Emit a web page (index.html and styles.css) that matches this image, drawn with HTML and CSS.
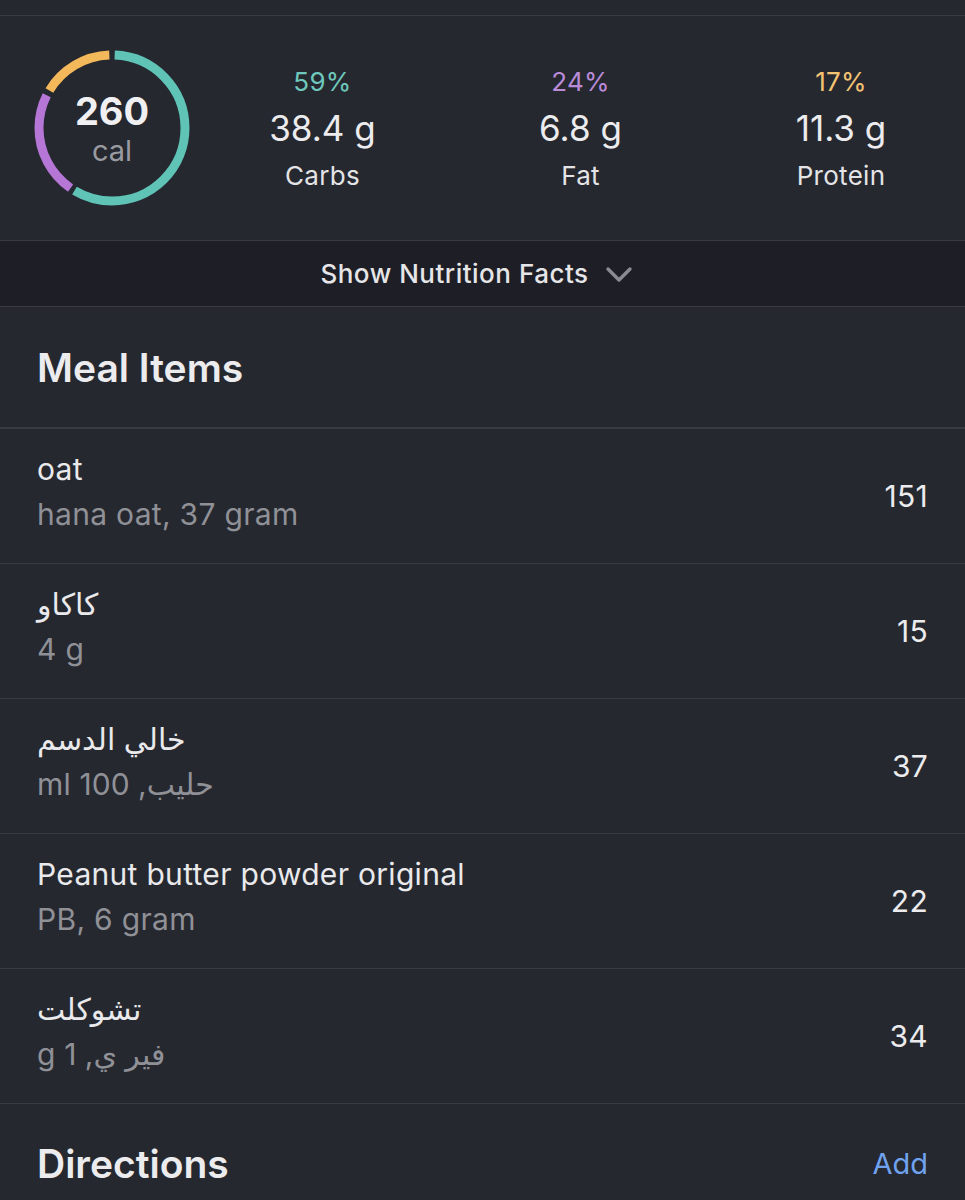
FILE: index.html
```html
<!DOCTYPE html>
<html lang="en">
<head>
  <meta charset="UTF-8">
  <meta name="viewport" content="width=device-width, initial-scale=1.0">
  <title>Meal</title>
  <link rel="stylesheet" href="styles.css">
</head>
<body>
  <div class="topbar"></div>

  <!-- Calorie summary -->
  <div class="summary">
    <div class="ring">
      <svg width="164" height="164" viewBox="0 0 164 164">
        <g transform="rotate(-90 82 82)" fill="none" stroke-width="9">
          <circle cx="82" cy="82" r="73" pathLength="100" stroke="#5fc3b6" stroke-dasharray="58 42" stroke-dashoffset="-0.6"></circle>
          <circle cx="82" cy="82" r="73" pathLength="100" stroke="#b576d6" stroke-dasharray="22.8 77.2" stroke-dashoffset="-59.6"></circle>
          <circle cx="82" cy="82" r="73" pathLength="100" stroke="#f3b85a" stroke-dasharray="15.8 84.2" stroke-dashoffset="-83.6"></circle>
        </g>
      </svg>
      <div class="ring-label">
        <div class="cal-num">260</div>
        <div class="cal-unit">cal</div>
      </div>
    </div>
    <div class="macros">
      <div class="macro">
        <div class="pct carbs">59%</div>
        <div class="grams">38.4 g</div>
        <div class="name">Carbs</div>
      </div>
      <div class="macro">
        <div class="pct fat">24%</div>
        <div class="grams">6.8 g</div>
        <div class="name">Fat</div>
      </div>
      <div class="macro">
        <div class="pct protein">17%</div>
        <div class="grams">11.3 g</div>
        <div class="name">Protein</div>
      </div>
    </div>
  </div>

  <div class="facts-toggle">
    Show Nutrition Facts
    <svg width="28" height="18" viewBox="0 0 28 18"><path d="M3 3 L14 14 L25 3" fill="none" stroke="#8a8b92" stroke-width="3.4" stroke-linecap="round" stroke-linejoin="round"/></svg>
  </div>

  <!-- Meal items -->
  <div class="section-head">
    <h2>Meal Items</h2>
  </div>
  <div class="items">
    <div class="item">
      <div class="item-text">
        <div class="item-title" dir="auto">oat</div>
        <div class="item-sub" dir="auto">hana oat, 37 gram</div>
      </div>
      <div class="item-cal">151</div>
    </div>
    <div class="item">
      <div class="item-text">
        <div class="item-title" dir="auto">كاكاو</div>
        <div class="item-sub" dir="auto">4 g</div>
      </div>
      <div class="item-cal">15</div>
    </div>
    <div class="item">
      <div class="item-text">
        <div class="item-title" dir="auto">خالي الدسم</div>
        <div class="item-sub" dir="auto">حليب, 100 ml</div>
      </div>
      <div class="item-cal">37</div>
    </div>
    <div class="item">
      <div class="item-text">
        <div class="item-title" dir="auto">Peanut butter powder original</div>
        <div class="item-sub" dir="auto">PB, 6 gram</div>
      </div>
      <div class="item-cal">22</div>
    </div>
    <div class="item">
      <div class="item-text">
        <div class="item-title" dir="auto">تشوكلت</div>
        <div class="item-sub" dir="auto">فير ي, 1 g</div>
      </div>
      <div class="item-cal">34</div>
    </div>
  </div>

  <!-- Directions -->
  <div class="directions">
    <h2>Directions</h2>
    <a class="add" href="#">Add</a>
  </div>
</body>
</html>
```

FILE: styles.css
```css
html, body { margin: 0; padding: 0; overflow: hidden; }
body { font-family: "Inter", "DejaVu Sans", sans-serif; background-color: #262830; color: #ececee; width: 965px; }

.topbar { height: 15px; border-bottom: 1px solid #383a42; }

.summary { display: flex; align-items: center; height: 224px; border-bottom: 1px solid #383a42; }
.ring { position: relative; width: 164px; height: 164px; margin-left: 30px; }
.ring svg { display: block; }
.ring-label { position: absolute; inset: 0; display: flex; flex-direction: column; align-items: center; justify-content: center; padding-top: 6px; }
.cal-num { font-size: 38px; font-weight: 700; line-height: 40px; color: #f0f0f2; }
.cal-unit { font-size: 29px; line-height: 40px; color: #9a9ba1; }

.macros { display: grid; grid-template-columns: 257px 259px 262px; }
.macro { text-align: center; }
.pct { font-size: 26px; line-height: 47px; letter-spacing: 0.3px; }
.pct.carbs { color: #6ec8bc; }
.pct.fat { color: #b98bd9; }
.pct.protein { color: #f3c372; }
.grams { font-size: 35px; line-height: 47px; color: #ececee; }
.name { font-size: 26px; line-height: 47px; color: #e4e4e6; letter-spacing: 0.3px; }

.facts-toggle { height: 65px; background-color: #1e1f26; border-bottom: 1px solid #383a42; display: flex; align-items: center; justify-content: center; gap: 16px; font-size: 26px; font-weight: 500; letter-spacing: 0.5px; color: #e6e6e8; padding-right: 12px; }
.facts-toggle svg { margin-top: 2px; }

.section-head { height: 120px; display: flex; align-items: center; padding: 0 37px; border-bottom: 2px solid #3a3c44; }
h2 { margin: 0; font-size: 39px; font-weight: 600; color: #ececee; }

.item { display: flex; align-items: center; justify-content: space-between; height: 134px; border-bottom: 1px solid #383a42; padding: 0 37px; }
.item-text { padding-bottom: 8px; }
.item-title, .item-sub { text-align: left; font-size: 30px; line-height: 45px; letter-spacing: 0.3px; }
.item-title { color: #eaeaec; }
.item-sub { color: #909197; }
.item-cal { font-size: 30px; color: #ececee; letter-spacing: 0.3px; }

.directions { display: flex; align-items: center; justify-content: space-between; padding: 36px 37px; }
.add { color: #6fa2ef; font-size: 29px; text-decoration: none; }
```
